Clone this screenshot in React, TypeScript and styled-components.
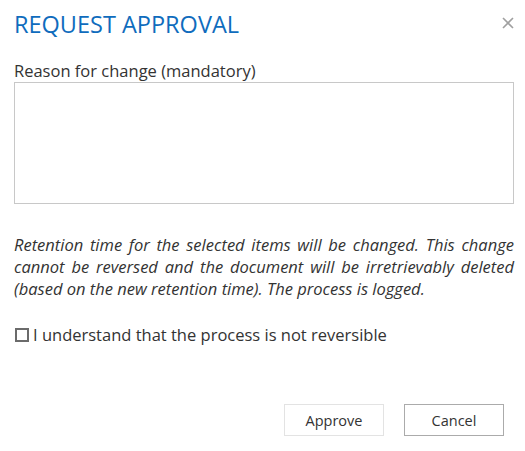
import React from "react";
import styled, { createGlobalStyle } from "styled-components";

const Global = createGlobalStyle`
  html, body { margin: 0; padding: 0; background: #fff; }
  body { font-family: "Open Sans", "Noto Sans", sans-serif; color: #333; }
  * { box-sizing: border-box; }
`;

const Dialog = styled.div`
  width: 525px;
  height: 451px;
  padding: 9px 11px 0 14px;
  display: flex;
  flex-direction: column;
`;

const Header = styled.div`
  display: flex;
  align-items: flex-start;
  justify-content: space-between;
`;

const Title = styled.h1`
  margin: 0;
  font-size: 23.5px;
  line-height: 30px;
  font-weight: 400;
  color: #0f6cbd;
  letter-spacing: 0;
`;

const Close = styled.button`
  border: 0;
  background: none;
  padding: 0;
  margin-top: 8px;
  width: 12px;
  height: 12px;
  cursor: pointer;
  display: flex;
`;

const Label = styled.label`
  margin-top: 21px;
  font-size: 16.5px;
  line-height: 22px;
  color: #333;
`;

const TextArea = styled.textarea`
  width: 500px;
  height: 122px;
  border: 1px solid #c8c8c8;
  resize: none;
  font: inherit;
  padding: 6px;
  outline: none;
`;

const Notice = styled.div`
  margin-top: 30px;
  width: 500px;
  font-style: italic;
  font-size: 16.5px;
  line-height: 22px;
  color: #333;
`;

const Line = styled.div<{ $full?: boolean }>`
  text-align: justify;
  text-align-last: ${(p) => (p.$full ? "justify" : "left")};
  white-space: nowrap;
`;

const CheckRow = styled.label`
  margin-top: 24px;
  display: flex;
  align-items: center;
  gap: 4px;
  font-size: 16.5px;
  line-height: 22px;
  color: #333;
`;

const Box = styled.span`
  width: 14px;
  height: 14px;
  border: 2px solid #6b6b6b;
  margin-left: 1px;
  flex: none;
`;

const Buttons = styled.div`
  margin-top: auto;
  margin-bottom: 15px;
  display: flex;
  justify-content: flex-end;
  gap: 20px;
  padding-right: 10px;
`;

const Button = styled.button<{ $primary?: boolean }>`
  width: 100px;
  height: 32px;
  background: #fff;
  border: 1px solid ${(p) => (p.$primary ? "#e3e3e3" : "#ababab")};
  font-family: inherit;
  font-size: 14.5px;
  color: #333;
  padding: 0;
`;

export default function App() {
  return (
    <>
      <Global />
      <Dialog>
        <Header>
          <Title>REQUEST APPROVAL</Title>
          <Close aria-label="Close">
            <svg width="12" height="12" viewBox="0 0 12 12">
              <path d="M1 1 L11 11 M11 1 L1 11" stroke="#a0a0a0" strokeWidth="1.6" />
            </svg>
          </Close>
        </Header>
        <Label>Reason for change (mandatory)</Label>
        <TextArea />
        <Notice>
          <Line $full>Retention time for the selected items will be changed. This change</Line>
          <Line $full>cannot be reversed and the document will be irretrievably deleted</Line>
          <Line>(based on the new retention time). The process is logged.</Line>
        </Notice>
        <CheckRow>
          <Box />
          I understand that the process is not reversible
        </CheckRow>
        <Buttons>
          <Button $primary>Approve</Button>
          <Button>Cancel</Button>
        </Buttons>
      </Dialog>
    </>
  );
}
